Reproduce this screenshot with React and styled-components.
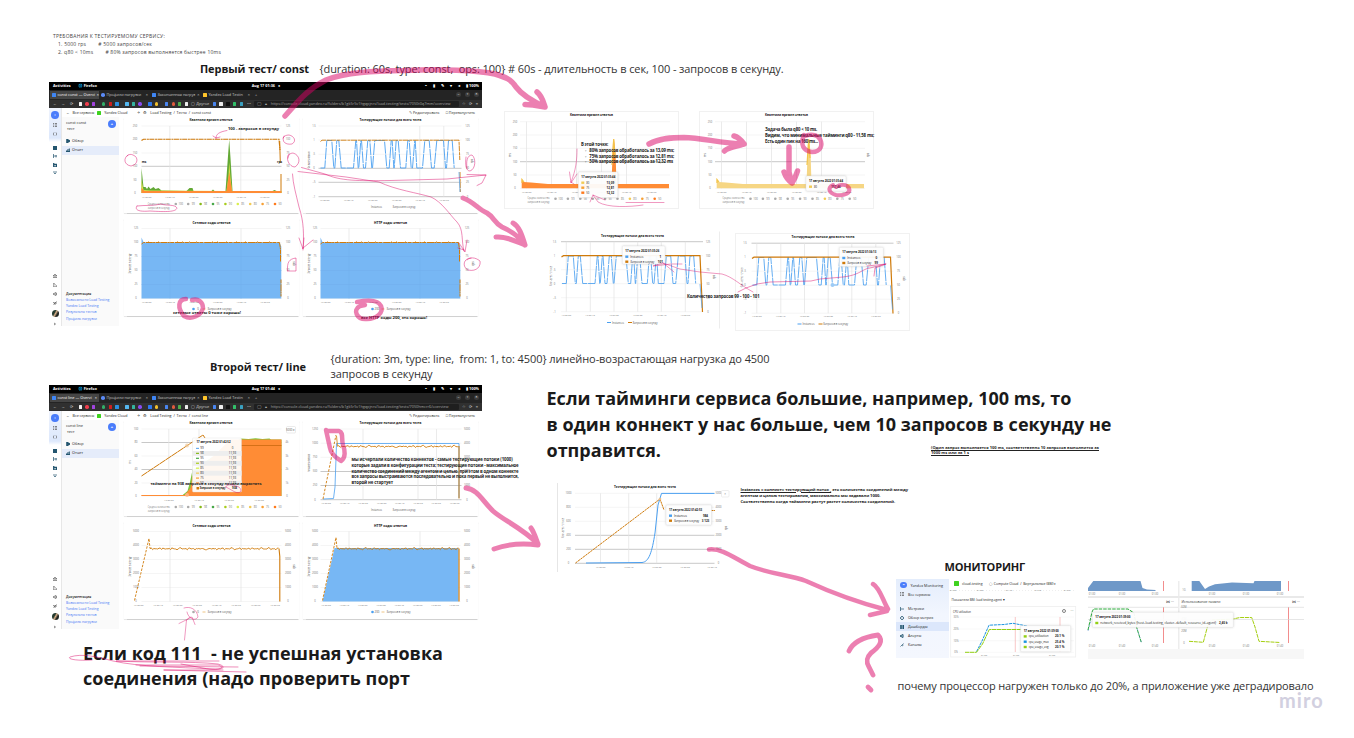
import React, { useLayoutEffect, useRef, useState } from "react";
import styled, { createGlobalStyle } from "styled-components";

const Global = createGlobalStyle`
  * { box-sizing: border-box; }
  html, body { margin: 0; padding: 0; background: #fff; }
  body { font-family: "Open Sans", "Noto Sans", sans-serif; color: #1a1a1a; overflow: hidden; }
`;

const BLUE = "#4a9ff0";
const AREA = "#77b7f4";
const AMBER = "#cf7a0a";
const ORANGE = "#ff8c35";
const GRID = "#e2e2e2";

/* ---------- free canvas ---------- */
const Board = styled.main`
  position: relative;
  width: 1354px;
  height: 738px;
  background: #fff;
  overflow: hidden;
`;
const Pin = styled.section`
  position: absolute;
  left: ${(p) => p.$x}px;
  top: ${(p) => p.$y}px;
  width: ${(p) => (p.$w ? `${p.$w}px` : "max-content")};
  ${(p) => p.$h && `height: ${p.$h}px;`}
`;
const NoteBox = styled.div`
  display: flex;
  flex-direction: column;
  align-items: flex-start;
  font-size: ${(p) => p.$size}px;
  line-height: ${(p) => p.$lh}px;
  font-weight: ${(p) => (p.$bold ? 700 : 400)};
  color: ${(p) => p.$color || "#1a1a1a"};
  ${(p) => p.$font && `font-family: ${p.$font};`}
`;
const Line = styled.span`
  white-space: pre;
  padding-left: ${(p) => p.$indent || 0}px;
  text-decoration: ${(p) => (p.$underline ? "underline" : "none")};
  text-decoration-thickness: 0.5px;
`;

/* One line whose tracking is adjusted so that it fills the given width. */
function FitLine({ width, children, ...rest }) {
  const ref = useRef(null);
  const [track, setTrack] = useState(0);
  useLayoutEffect(() => {
    if (!width || !ref.current) return;
    const range = document.createRange();
    range.selectNodeContents(ref.current);
    const natural = range.getBoundingClientRect().width;
    setTrack((width - natural) / String(ref.current.textContent).length);
  }, [width]);
  return (
    <Line ref={ref} style={{ letterSpacing: `${track}px` }} {...rest}>
      {children}
    </Line>
  );
}

function Note({ x, y, size, lh, bold, color, font, lines }) {
  return (
    <Pin $x={x} $y={y}>
      <NoteBox $size={size} $lh={lh} $bold={bold} $color={color} $font={font}>
        {lines.map((l, i) => (
          <FitLine key={i} width={l.w} $indent={l.indent} $underline={l.u}>
            {l.t}
          </FitLine>
        ))}
      </NoteBox>
    </Pin>
  );
}

/* ---------- browser window ---------- */
const Window = styled.div`
  display: flex;
  flex-direction: column;
  width: 433px;
  height: 243.5px;
`;
const OsBar = styled.div`
  display: flex;
  justify-content: space-between;
  align-items: center;
  height: 8px;
  padding: 0 3px 0 4px;
  background: #000;
  color: #fff;
  font-size: 3.8px;
  line-height: 8px;
  font-weight: 700;
`;
const OsGroup = styled.div`
  display: flex;
  justify-content: ${(p) => (p.$end ? "flex-end" : "flex-start")};
  gap: ${(p) => p.$gap || 7}px;
  width: 170px;
  white-space: nowrap;
`;
const TabBar = styled.div`
  display: flex;
  align-items: center;
  height: 9.5px;
  padding-left: 1px;
  background: #242424;
  color: #bbb;
  font-size: 3.8px;
  line-height: 8px;
`;
const Tab = styled.div`
  display: flex;
  align-items: center;
  gap: 2px;
  width: ${(p) => p.$w}px;
  height: 8.5px;
  padding: 0 2px;
  background: ${(p) => (p.$active ? "#454545" : "transparent")};
  color: ${(p) => (p.$active ? "#fff" : "#c4c4c4")};
  white-space: nowrap;
`;
const TabTitle = styled.span`
  flex: 1;
`;
const Fav = styled.i`
  flex: none;
  width: ${(p) => p.$s || 3.5}px;
  height: ${(p) => p.$s || 3.5}px;
  border-radius: ${(p) => (p.$round ? "50%" : "0.5px")};
  background: ${(p) => p.$c};
`;
const WinButtons = styled.div`
  display: flex;
  gap: 4px;
  margin-left: auto;
  padding-right: 3px;
`;
const WinButton = styled.span`
  width: 5px;
  height: 5px;
  border-radius: 50%;
  background: #3b3b3b;
  color: #fff;
  font-size: 4px;
  line-height: 4.5px;
  text-align: center;
`;
const UrlBar = styled.div`
  display: flex;
  align-items: center;
  gap: 3.3px;
  height: 8.8px;
  padding: 0 4px;
  background: #303030;
  color: #cfcfcf;
  font-size: 3.8px;
  line-height: 8px;
  white-space: nowrap;
`;
const Nav = styled.span`
  width: ${(p) => p.$w || 5}px;
`;
const Address = styled.div`
  flex: 1;
  display: flex;
  align-items: center;
  gap: 4px;
  height: 6.6px;
  padding-left: 3px;
  background: #1f1f1f;
  border-radius: 1px;
  line-height: 6px;
  color: #a5a5a5;
`;
const Body = styled.div`
  display: flex;
  flex: 1;
  min-height: 0;
`;
const Rail = styled.div`
  display: flex;
  flex-direction: column;
  justify-content: space-between;
  align-items: center;
  width: 13px;
  padding: 3px 0 0;
  background: linear-gradient(#eef3fd 0, #dde8fc 30px, #fff 34px);
  border-right: 1px solid #e7e7e7;
`;
const RailGroup = styled.div`
  display: flex;
  flex-direction: column;
  align-items: center;
  gap: ${(p) => p.$gap}px;
`;
const Disc = styled.i`
  flex: none;
  width: ${(p) => p.$s}px;
  height: ${(p) => p.$s}px;
  border-radius: 50%;
  background: ${(p) => p.$c || "#4a7dfb"};
  color: #fff;
  font: normal 700 4px/7px "Open Sans", sans-serif;
  text-align: center;
`;
const Side = styled.div`
  display: flex;
  flex-direction: column;
  width: 57px;
  padding-bottom: 3.5px;
  background: linear-gradient(#fff 0, #fff 9px, #fafafa 9px);
  font-size: 3.8px;
  line-height: 6.3px;
  color: #222;
`;
const SideHead = styled.div`
  display: flex;
  justify-content: space-between;
  align-items: flex-start;
  height: 20px;
  margin-top: 8px;
  padding: 3.8px 3px 0 4px;
`;
const SideItem = styled.div`
  display: flex;
  align-items: center;
  gap: 2px;
  height: 8.8px;
  padding-left: 4px;
  background: ${(p) => (p.$active ? "#e5ecfa" : "transparent")};
`;
const Links = styled.div`
  display: flex;
  flex-direction: column;
  gap: 0;
  margin-top: auto;
  padding-left: 4px;
  color: #3d73f5;
  font-size: 3.4px;
`;
const LinksTitle = styled.b`
  color: #111;
  font-weight: 600;
`;
const Main = styled.div`
  flex: 1;
  display: flex;
  flex-direction: column;
`;
const Crumbs = styled.div`
  display: flex;
  align-items: center;
  gap: 3px;
  height: 8.7px;
  margin-left: -57px;
  padding: 0 7px 0 4px;
  font-size: 3.6px;
  line-height: 8px;
  color: #222;
  white-space: nowrap;
`;
const Spacer = styled.span`
  flex: ${(p) => (p.$w ? `0 0 ${p.$w}px` : 1)};
`;
const Cards = styled.div`
  display: grid;
  grid-template-columns: 175px 175px;
  grid-template-rows: 96.5px 98px;
  gap: 5px 4px;
  padding-left: 4.5px;
`;
const Card = styled.div`
  background: #fff;
  box-shadow: 0 0.5px 1px rgba(0, 0, 0, 0.18);
`;
const Plain = styled.div`
  height: 100%;
  background: #fff;
  border: 1px solid #f1f1f1;
  ${(p) => p.$soft && "border-color: transparent #ededed transparent transparent;"}
`;
const Drawing = styled.svg`
  display: block;
  width: 100%;
  height: 100%;
  overflow: visible;
  font-family: "Open Sans", "Noto Sans", sans-serif;
`;

/* Small svg label centred on x,y; w fixes its drawn width. */
function T({ x, y, w, s = 3, c = "#777", b, rot, children }) {
  return (
    <text
      x={w ? x - w / 2 : x}
      y={y + s * 0.36}
      fontSize={s}
      fill={c}
      fontWeight={b ? 700 : 400}
      textAnchor={w ? "start" : "middle"}
      textLength={w}
      lengthAdjust="spacingAndGlyphs"
      transform={rot ? `rotate(-90 ${x} ${y})` : undefined}
    >
      {children}
    </text>
  );
}

function Axes({ x0, x1, ys, vs = [], left = [], right = [], lx, rx, times = [], ty, strong = [] }) {
  return (
    <g>
      {ys.map((y, i) => (
        <line key={y} x1={x0} x2={x1} y1={y} y2={y} stroke={strong.includes(i) ? "#a3a3a3" : "#efefef"} strokeWidth=".6" />
      ))}
      {vs.map((x) => (
        <line key={x} x1={x} x2={x} y1={ys[0]} y2={ys[ys.length - 1]} stroke={GRID} strokeWidth=".7" />
      ))}
      {left.map((t, i) => <T key={i} x={lx} y={ys[i]} s={2.6}>{t}</T>)}
      {right.map((t, i) => <T key={i} x={rx} y={ys[i]} s={2.6}>{t}</T>)}
      {times.map((x, i) => <T key={x} x={x} y={ty} w={9.5} s={2.5}>{`17:35:${i}0`}</T>)}
    </g>
  );
}

const steps = (a, d, n) => Array.from({ length: n }, (_, i) => a + d * i);
const WAVE = [133, 139, 154, 160, 163, 169, 175, 182, 219, 226, 228, 233, 235, 241, 243, 249, 255, 262, 268, 274, 276, 283, 312, 319, 326, 332, 335, 340, 341, 347, 353, 360, 376, 382, 386, 392, 396, 403, 404, 409, 426, 433, 446, 453, 461, 469, 489, 495, 498, 504, 515, 521];
function wavePath(dx, top, bot) {
  let d = `M${320 + dx} ${bot}`;
  WAVE.forEach((v, i) => {
    const low = i % 4 === 0 || i % 4 === 3;
    d += `L${(v / 3 + 280 + dx).toFixed(1)} ${low ? bot : top}`;
  });
  return d;
}

function Zig({ x0, x1, y, amp = 1.1, w = 0.9, n = 60 }) {
  let d = `M${x0} ${y}`;
  for (let i = 1; i <= n; i++) {
    const k = ((i * i * 31 + i * 17) % 23) / 23;
    d += `L${(x0 + ((x1 - x0) * i) / n).toFixed(1)} ${(y + (k - 0.5) * 2 * amp * (i % 7 < 4 ? 1 : 0.25)).toFixed(2)}`;
  }
  return <path d={d} fill="none" stroke={AMBER} strokeWidth={w} />;
}

const PCT = ["100", "99", "98", "95", "90", "85", "80", "75", "50"];
const PCT_C = ["#aaa", "#aaa", "#86b817", "#4aa84a", "#a8cc1c", "#d9ee4c", "#f2cb55", "#f7a034", "#ff7a1c"];
function PctLegend({ x, y, step = 12.4, text = 22, colors = PCT_C }) {
  return (
    <g>
      <T x={x + text / 2 - 28} y={y - 0.5} w={text} s={2.8}>Среднее количество</T>
      <T x={x + text / 2 - 28} y={y + 3.5} w={text} s={2.8}>запросов в секунду</T>
      {PCT.map((p, i) => (
        <g key={p}>
          <circle cx={x + step * i} cy={y} r="1.3" fill={colors[i]} />
          <T x={x + 5 + step * i} y={y} s={2.7}>{p}</T>
        </g>
      ))}
    </g>
  );
}

function TimingConst() {
  return (
    <Drawing viewBox="123.5 117 175 96.5">
      <T x={210.500} y={120} w={43} s={3.2} c="#111" b>Квантили времен ответов</T>
      <Axes x0={141} x1={281} ys={[126, 139.3, 153, 166.3, 180, 193]} strong={[3]} vs={[169.3, 240.3]}
        left={["250", "200", "150", "100", "50", "0"]} lx={134.5} right={["125", "100", "75", "50", "25", "0"]} rx={287.5}
        times={[146, 169.3, 193, 217, 240.5, 264]} ty={197} />
      <path d="M141 193V168L143 187L145 187L146.500 189L148 186.500L150 189L153 187L155 189L158 188L161 190.500L186 191L189 188L192 188L193 191L211 191L212.500 189.500L214 191L225 191L227.500 156L228.700 139.500L230 158L232 191L272 191L274 190L276 191H281V193Z" fill="#63a935" />
      <path d="M141 193V180L143 190L150 190.500L226 191L228 176L228.700 162L230 178L231.500 191H281V193Z" fill="#dbe04a" />
      <path d="M141 193V188L144 191H226L228.700 172L231.500 191H281V193Z" fill={ORANGE} />
      <path d="M141 140.500L143 139.300H278.500L279.500 150" fill="none" stroke={AMBER} strokeWidth="1.100" strokeDasharray="5 .7 2 .5" />
      <path d="M279.200 141L279.800 163M280.500 174V191" stroke={AMBER} strokeWidth="1" />
      <T x={143.500} y={161.500} s={3.200} c="#222" b>ms</T>
      <T x={279} y={161.500} s={3.200} c="#222" b>rps</T>
      <T x={253} y={128.500} w={51} s={4} c="#222" b>100 - запросов в секунду</T>
      <PctLegend x={175.300} y={204} />
    </Drawing>
  );
}

function ThreadsConst() {
  return (
    <Drawing viewBox="302.5 117 175 96.5">
      <T x={390} y={120} w={62} s={3.200} c="#111" b>Тестирующие потоки для всего теста</T>
      <Axes x0={318} x1={461} ys={[126, 140, 154.300, 168.300, 182.300, 196.700]} strong={[3, 4, 5]} vs={[419.300, 443.300]}
        left={["1.5", "1", ".5", "0", "-.5", "-1"]} lx={313.500} right={["125", "100", "75", "50", "25", "0"]} rx={467}
        times={[324, 348, 372, 396, 419.500, 443.500]} ty={200} />
      <T x={308.500} y={160} w={17} s={2.800} c="#333" rot>Количество потоков</T>
      <T x={471.500} y={161} s={2.800} c="#333" rot>rps</T>
      <path d={wavePath(0, 140.500, 168)} fill="none" stroke={BLUE} strokeWidth=".9" strokeDasharray="12 .8" />
      <path d="M320 141.500L321.500 140.200H458.500L459.300 160M459.500 172L459.800 192" fill="none" stroke={AMBER} strokeWidth=".9" strokeDasharray="6 .8 3 .5" />
      <path d="M458.500 172L459.500 192" stroke={BLUE} strokeWidth=".7" />
      <T x={376} y={206.700} w={11} s={2.800} c="#555">Instances</T>
      <T x={403.500} y={206.700} w={23} s={2.800} c="#555">Запросов в секунду</T>
    </Drawing>
  );
}

function Codes({ dx = 0, dy = 0, title, tw, labels, code, line, children, times }) {
  return (
    <Drawing viewBox={`${123.5 + dx} ${218.5 + dy} 175 98`}>
      <T x={211 + dx} y={223 + dy} w={tw} s={3.200} c="#111" b>{title}</T>
      <Axes x0={141 + dx} x1={281 + dx} ys={steps(229 + dy, 14, 6)} strong={[]} vs={[169.500 + dx, 240.500 + dx]}
        left={labels} lx={135.500 + dx} right={labels} rx={287.500 + dx}
        times={times || steps(146 + dx, 23.700, 6)} ty={302.500 + dy} />
      <T x={129.500 + dx} y={264 + dy} w={20} s={2.800} c="#333" rot>Запросов в секунду</T>
      <T x={293 + dx} y={264 + dy} s={2.800} c="#222" rot>rps</T>
      {children}
      <circle cx={193 + dx} cy={309.500 + dy} r="1.300" fill={code === "0" && line ? "#aaa" : BLUE} />
      <T x={197.500 + dx} y={309.500 + dy} s={2.800} c="#555">{code}</T>
      <line x1={202 + dx} x2={205 + dx} y1={309.500 + dy} y2={309.500 + dy} stroke="#e8ad50" strokeWidth=".7" />
      <T x={219 + dx} y={309.500 + dy} w={24} s={2.800} c="#555">Запросов в секунду</T>
    </Drawing>
  );
}

function FlatArea({ dx = 0 }) {
  return (
    <g transform={`translate(${dx} 0)`}>
      <path d="M141 299V238L143 242.500L145 243H279L280.800 247V299Z" fill={AREA} />
      <path d="M141 257H281M141 271H281M141 285H281M169.500 243V299M240.500 243V299" stroke="#6facea" strokeWidth=".4" />
      <path d="M141 244.500L143 243H279L280 250V262M280.500 280V297" fill="none" stroke={AMBER} strokeWidth="1" strokeDasharray="4 .8 7 .3 2 .5" />
      {[148, 158, 177, 182, 189, 196, 212, 217, 226, 236, 245, 257, 269].map((x) => (
        <path key={x} d={`M${x - 1} 243L${x} 242.300L${x + 1} 243`} stroke={AMBER} strokeWidth=".8" fill="none" />
      ))}
    </g>
  );
}

function TimingLine() {
  return (
    <Drawing viewBox="123.5 420 175 96.5">
      <T x={210.500} y={423} w={43} s={3.200} c="#111" b>Квантили времен ответов</T>
      <Axes x0={141} x1={281} ys={[429, 442.500, 456, 469.500, 483, 496]} strong={[1, 3]} vs={[168.300, 198.500]}
        left={["100", "80", "60", "40", "20", "0"]} lx={135.500} right={["", "4k", "3k", "2k", "1k", "0"]} rx={286.500}
        times={[168.300, 198.500, 228.500, 258.500]} ty={500} />
      <rect x={286} y={426.500} width="9" height="6.500" rx="1" fill="#fff" stroke="#ddd" strokeWidth=".6" />
      <T x={290} y={429.500} s={2.800} c="#555">5000 ▾</T>
      <T x={129} y={462} s={2.800} rot>ms</T>
      <path d="M181 496L187 491L189.500 482L192 470L240 438.500L248 439L255 438.300L262 439L269 438.500L270.500 439.500H281V496Z" fill="#7fc43a" />
      <path d="M141 496V495.300H184L190 488L192 476L230 439.500H281V496Z" fill={ORANGE} />
      <path d="M141 495.500H186" stroke={ORANGE} strokeWidth="1" />
      <path d="M141 476L202.500 435L204.500 438" fill="none" stroke={AMBER} strokeWidth="1" strokeDasharray="7 .3" />
      <path d="M240 445.500H281" stroke="#cc6a10" strokeWidth=".8" />
      <circle cx={186.500} cy={445.500} r="2" fill="#efc99b" opacity=".7" />
      <circle cx={186.500} cy={495} r="2" fill="#ffb98a" opacity=".8" />
      <rect x={192} y={438} width="49" height="54" rx="1" fill="#fff" fillOpacity=".93" stroke="#ddd" strokeWidth=".4" />
      <T x={213} y={442} w={34} s={3} c="#111" b>17 августа 2022 01:42:52</T>
      {["99", "98", "95", "90", "85", "80", "75", "50"].map((p, i) => (
        <g key={p}>
          {i % 2 === 1 && <rect x={192} y={446 + i * 4.950} width="49" height="4.900" fill="#eee" />}
          <rect x={195.500} y={447.800 + i * 4.950} width="3" height="1.200" fill={["#6aaef0", "#86b817", "#4aa84a", "#a8cc1c", "#d9ee4c", "#f2cb55", "#f7a034", "#ff7a1c"][i]} />
          <T x={201.500} y={448.400 + i * 4.950} s={2.900} c="#222">{p}</T>
          <T x={232} y={448.400 + i * 4.950} s={2.900} c="#222">{i ? "11,93" : "0"}</T>
        </g>
      ))}
      <rect x={196} y={487} width="2.500" height="2.500" fill={AMBER} />
      <T x={212} y={488.300} w={26} s={3} c="#222" b>Запросов в секунду</T>
      <T x={234} y={488.300} s={3} c="#222" b>938</T>
      <T x={205.500} y={483.500} w={111} s={4} c="#222" b>тайминги на 938 запросов в секунду начали вырастать</T>
      <PctLegend x={175.300} y={507} />
    </Drawing>
  );
}

function ThreadsLine() {
  return (
    <Drawing viewBox="302.5 420 175 96.5">
      <T x={390} y={423} w={62} s={3.200} c="#111" b>Тестирующие потоки для всего теста</T>
      <Axes x0={320} x1={461} ys={[429, 443.200, 457.300, 471.500, 485.500, 499.700]} strong={[3, 4, 5]} vs={[362.500, 417.500, 436]}
        left={["1250", "1000", "750", "500", "250", "0"]} lx={314.500} right={["5000", "4000", "3000", "2000", "1000", "0"]} rx={466.500}
        times={[325.500, 344, 362.500, 381, 399, 417.500, 435.500, 454]} ty={503} />
      <T x={308.500} y={463} w={18} s={2.800} c="#333" rot>Количество потоков</T>
      <path d="M322.500 499L333 498.500L334.500 487L336 443.500H458.500V498" fill="none" stroke={BLUE} strokeWidth=".8" />
      <path d="M322.500 499L335.500 435" fill="none" stroke={AMBER} strokeWidth=".9" strokeDasharray="2.500 1.500" />
      <path d="M336 436L337 446" stroke={AMBER} strokeWidth=".8" />
      <Zig x0={337} x1={458} y={446.500} n={90} />
      <path d="M458.500 446V498.500" stroke={AMBER} strokeWidth="1" />
      <T x={376} y={509.700} w={11} s={2.800} c="#555">Instances</T>
      <T x={403.500} y={509.700} w={23} s={2.800} c="#555">Запросов в секунду</T>
    </Drawing>
  );
}

const FAVS = ["#f4f4f4", "#ef3d4d", "#a244e0", null, "#32b06a", "#d01f1f", "#2a8fe0", null, "#55b7ef", "#34b5a0", "#8a4bf0", null, "#2f78f0", "#f3c12d", null, "#4a86f0", "#e25b3d", "#4fae4a", "#eee"];

function Browser({ name, url, time, children }) {
  return (
    <Window>
      <OsBar>
        <OsGroup><span>Activities</span><span>🌐 Firefox</span></OsGroup>
        <span>Aug 17 {time} &nbsp; ●</span>
        <OsGroup $end $gap={6}><span>◓</span><span>▮</span><span>✎</span><span>▾</span><span>◂</span><span>▮ 100%</span></OsGroup>
      </OsBar>
      <TabBar>
        <Tab $active $w={49}><Fav $c="#3f86f5" /><TabTitle>{name} — Overvi</TabTitle>×</Tab>
        <Tab $w={51}><Fav $c="#5b8bf7" $round /><TabTitle>Профили нагрузки</TabTitle>×</Tab>
        <Tab $w={51}><Fav $c="#3f86f5" /><TabTitle>Законченная нагруз</TabTitle>×</Tab>
        <Tab $w={51}><Fav $c="#ffc52b" /><TabTitle>Yandex Load Testin</TabTitle>×</Tab>
        <Spacer $w={3} />+
        <WinButtons><WinButton>–</WinButton><WinButton>▫</WinButton><WinButton>×</WinButton></WinButtons>
      </TabBar>
      <UrlBar>
        <Nav>←</Nav><Nav>→</Nav><Nav $w={6}>⟳</Nav>
        {FAVS.map((c, i) => (c ? <Fav key={i} $c={c} $s={3.3} $round={i % 3 === 1} /> : <Fav key={i} $c="transparent" $s={0.1} />))}
        <span>▢ Другое</span>
        <Fav $c="#4a86f0" /><Fav $c="#eee" /><Fav $c="#111" /><Fav $c="#32c06a" /><Fav $c="#3aa0c0" /><Nav $w={4}>⋯</Nav>
        <Address><span>◯</span><span>🔒︎</span><span>https://console.cloud.yandex.ru/folders/b1gk5r5v1hgqpjnrs/load-testing/tests/{url}/overview</span></Address>
        <span>☆</span><span>⟳</span><span>≡</span>
      </UrlBar>
      <Body>
        <Rail>
          <RailGroup $gap={4.6}>
            <Disc $s={7.4}>›</Disc>
            <RailIcon d="M0 .5H1M1.800 .5H4M0 2H1M1.800 2H4M0 3.500H1M1.800 3.500H4" />
            <RailIcon d="M1 .5L0 2L1 3.500M3 .5L4 2L3 3.500" />
            <Spacer $w={0.5} />
            <RailIcon c="#23556f" w={1.8} d="M0 1H4M0 3H4" />
            <RailIcon c="#23556f" d="M.5 0V4M.5 2H4M3 3.500V1" />
            <RailIcon c="#23556f" w={1.3} d="M.7 0V4H3.500V1.500H1" />
            <RailIcon c="#23556f" d="M0 1H4M1 2.500H3" />
          </RailGroup>
          <RailGroup $gap={4.9}>
            <RailIcon d="M2 0L2.600 1.500H4L3 2.500L3.500 4L2 3L.5 4L1 2.500L0 1.500H1.400Z" />
            <RailIcon d="M2 0A2 2 0 1 0 4 2M2 1V2.500" />
            <RailIcon d="M0 2L3 .5V3.500ZM3.800 1V3" />
            <RailIcon d="M.5 3.500L3.500 .5M2 2H4M0 1.500L2 2V4" />
            <Disc $s={7} $c="linear-gradient(120deg,#243a2e 35%,#d8b08a 50%,#1f2420 70%)" />
            <RailIcon d="M1 1L2.500 2L1 3" />
          </RailGroup>
        </Rail>
        <Side>
          <SideHead>
            <div>{name}<br />&nbsp;тест</div>
            <Disc $s={8}>+</Disc>
          </SideHead>
          <Spacer $w={0.8} />
          <SideItem><RailIcon c="#23556f" w={1.6} d="M1 .5V3.500L3.500 2Z" />Обзор</SideItem>
          <SideItem $active><RailIcon c="#23556f" w={1} d="M0 3.500H4M1 3V2M2 3V1M3.300 3V.5" />Отчет</SideItem>
          <Links>
            <LinksTitle>Документация</LinksTitle>
            <span>Возможности Load Testing</span>
            <span>Yandex Load Testing</span>
            <span>Результаты тестов</span>
            <span>Профиль нагрузки</span>
          </Links>
        </Side>
        <Main>
          <Crumbs>
            <span>←</span><span>Все сервисы</span><Fav $c="#3fd21f" $s={4} /><span>Yandex Cloud</span>
            <Spacer $w={4} /><span>✧</span><span>⚙</span><span>Load Testing &nbsp;/&nbsp; Тесты &nbsp;/&nbsp; {name}</span>
            <Spacer />
            <span>✎ Редактировать</span><Spacer $w={0.5} /><span>□ Перезапустить</span>
          </Crumbs>
          <Cards>{children.map((c, i) => <Card key={i}>{c}</Card>)}</Cards>
        </Main>
      </Body>
    </Window>
  );
}

function RailIcon({ d, c = "#555", w = 0.7 }) {
  return (
    <svg width="4" height="4" viewBox="0 0 4 4" fill="none" stroke={c} strokeWidth={w}>
      <path d={d} />
    </svg>
  );
}

/* ---------- standalone snippets ---------- */
function SmallTiming({ dx = 0, fill, children }) {
  return (
    <Plain>
      <Drawing viewBox={`${505 + dx} 112 173 96`}>
        <T x={591.500 + dx} y={115} w={43} s={3.200} c="#111" b>Квантили времен ответов</T>
        <Axes x0={520 + dx} x1={670 + dx} ys={steps(121.700, 13.330, 6)} strong={[3]} vs={steps(526.500 + dx, 25, 5)}
          left={["250", "200", "150", "100", "50", "0"]} lx={515 + dx} times={steps(526.500 + dx, 25, 6)} ty={192} />
        <T x={510 + dx} y={155} s={2.800} c="#333" rot>ms</T>
        <path d={`M${521.700 + dx} 188.300V179L${523.500 + dx} 182L${531 + dx} 182.500L${548 + dx} 184H${611.500 + dx}L${613 + dx} 142L${614 + dx} 139L${615.500 + dx} 152L${616.500 + dx} 184H${669 + dx}V188.300Z`} fill={fill} />
        <path d={`M${522 + dx} 183V179.500L${524 + dx} 182M${612 + dx} 165L${613.700 + dx} 139L${615 + dx} 158`} stroke="#f3c54a" strokeWidth="1.200" fill="none" />
        <PctLegend x={555.500 + dx} y={198.700} colors={["#aaa", "#aaa", "#aaa", "#aaa", "#aaa", "#aaa", "#f2cb55", dx ? "#aaa" : "#f7a034", dx ? "#aaa" : "#ff7a1c"]} />
        {children}
      </Drawing>
    </Plain>
  );
}

function Tip({ x, y, w, h, title, tw, rows, step = 5, vx }) {
  return (
    <g>
      <rect x={x} y={y} width={w} height={h} rx="1" fill="#fff" fillOpacity=".94" stroke="#e3e3e3" strokeWidth=".5" filter="drop-shadow(0 .6px 1px rgba(0,0,0,.15))" />
      <T x={x + 3 + tw / 2} y={y + 5} w={tw} s={3} c="#111" b>{title}</T>
      {rows.map(([c, t, w2, v], i) => (
        <g key={i}>
          <rect x={x + 3} y={y + 9.500 + i * step} width="3" height="2.400" fill={c} />
          <T x={x + 8 + w2 / 2} y={y + 10.700 + i * step} w={w2} s={3} c="#222">{t}</T>
          <T x={x + (vx || w - 7)} y={y + 10.700 + i * step} s={3} c="#222" b>{v}</T>
        </g>
      ))}
    </g>
  );
}

function SmallThreads({ dx = 0, dy = 0, view, children }) {
  return (
    <Plain $soft={!dx}>
      <Drawing viewBox={view}>
        <T x={632.500 + dx} y={235.700 + dy} w={63} s={3.200} c="#111" b>Тестирующие потоки для всего теста</T>
        <Axes x0={561 + dx} x1={703 + dx} ys={steps(241.700 + dy, 14, 6)} strong={[0]} vs={[566.300, 590.300, 614, 637.700, 661.300, 685.300].map((v) => v + dx)}
          left={["1.5", "1", ".5", "0", "-.5", "-1"]} lx={554.500 + dx} right={["125", "100", "75", "50", "25", "0"]} rx={708 + dx}
          times={steps(566.300 + dx, 23.800, 6)} ty={315 + dy} />
        <T x={551 + dx} y={276 + dy} w={20} s={2.800} c="#333" rot>Количество потоков</T>
        <T x={713.500 + dx} y={277 + dy} s={2.800} c="#333" rot>rps</T>
        <path d={wavePath(242 + dx, 256 + dy, 283.500 + dy)} fill="none" stroke={BLUE} strokeWidth=".85" strokeDasharray="12 .8" />
        <path d={`M${561.500 + dx} 257L${563.500 + dx} 255.700H${700 + dx}L${702.500 + dx} 312`} transform={`translate(0 ${dy})`} fill="none" stroke={AMBER} strokeWidth="1.200" />
        <path d={`M${700 + dx} ${284 + dy}L${702 + dx} ${308 + dy}`} stroke={BLUE} strokeWidth=".7" />
        <path d={`M${607 + dx} ${322.500 + dy}h4`} stroke={BLUE} />
        <T x={618 + dx} y={322.500 + dy} w={12} s={2.800} c="#555">Instances</T>
        <path d={`M${628 + dx} ${322.500 + dy}h4`} stroke={AMBER} />
        <T x={645 + dx} y={322.500 + dy} w={25} s={2.800} c="#555">Запросов в секунду</T>
        {children}
      </Drawing>
    </Plain>
  );
}

function GrowthChart() {
  return (
    <Drawing viewBox="557 483 177 89">
      <path d="M557.500 483V572" stroke="#e6e6e6" />
      <T x={645} y={487} w={62} s={3.200} c="#111" b>Тестирующие потоки для всего теста</T>
      <Axes x0={575} x1={714.500} ys={steps(493.300, 14, 6)} strong={[3, 4, 5]} vs={[600.500, 628.700, 656.700]}
        left={["1000", "800", "600", "400", "200", "0"]} lx={568.500} right={["5000", "4000", "3000", "2000", "1000", "0"]} rx={718.500}
        times={[600.500, 628.700, 656.700, 685, 712]} ty={567.500} />
      <T x={563} y={528} w={20} s={2.800} c="#333" rot>Количество потоков</T>
      <T x={726} y={528} s={2.800} c="#333" rot>rps</T>
      <path d="M575.500 563L660 499L664 510M711 510.500H715" fill="none" stroke={AMBER} strokeWidth="1" strokeDasharray="2.500 .6" />
      <path d="M586 563L642 562.500C649 562 652 552 655 533L658 505L661.500 493.400H714.500" fill="none" stroke={BLUE} strokeWidth="1" />
      <circle cx="660" cy="499" r="1.300" fill="#e9bd8b" />
      <rect x="721.500" y="490.500" width="7.500" height="6.500" rx="1" fill="#fff" stroke="#ddd" strokeWidth=".5" />
      <T x={725} y={494} s={3}>×</T>
      <Tip x={666} y={505} w={45.500} h={20} title="17 августа 2022 01:42:53" tw={33} vx={39.500} rows={[[BLUE, "Instances", 13, "984"], [AMBER, "Запросов в секунду", 25, "3 123"]]} />
    </Drawing>
  );
}

/* ---------- monitoring ---------- */
const Monitor = styled.div`
  display: flex;
  width: 180px;
  height: 79px;
  font-size: 3.7px;
  line-height: 7px;
`;
const MonSide = styled.div`
  width: 53px;
  padding-top: 2px;
  background: linear-gradient(#e4edfc, #f2f6fe 45%, #f4f7fe);
  display: flex;
  flex-direction: column;
`;
const MonItem = styled.div`
  display: flex;
  align-items: center;
  gap: 4px;
  height: ${(p) => p.$h || 9}px;
  padding-left: 4px;
  background: ${(p) => (p.$active ? "#dce7fb" : "transparent")};
`;
const MonMain = styled.div`
  flex: 1;
  display: flex;
  flex-direction: column;
`;
const MonTop = styled.div`
  display: flex;
  align-items: center;
  gap: 3px;
  height: 9px;
  padding-left: 5px;
  font-size: 3.4px;
  white-space: nowrap;
`;
const MonBody = styled.div`
  flex: 1;
`;

function MonitoringPanel() {
  return (
    <Monitor>
      <MonSide>
        <MonItem $h={8}><Disc $s={6.500}>⌃</Disc>Yandex Monitoring</MonItem>
        <MonItem $h={10}><RailIcon d="M0 .5H1M1.800 .5H4M0 2H1M1.800 2H4M0 3.500H1M1.800 3.500H4" />Все сервисы</MonItem>
        <Spacer $w={5} />
        <MonItem><RailIcon c="#23556f" d="M.5 0V4M.5 2H4" />Метрики</MonItem>
        <MonItem><RailIcon c="#23556f" w={1} d="M2 .5A1.500 1.500 0 1 0 2.100 .5Z" />Обзор метрик</MonItem>
        <MonItem $active><RailIcon c="#23556f" w={1.600} d="M1 0V4M3.200 0V4" />Дашборды</MonItem>
        <MonItem><RailIcon c="#23556f" w={1} d="M0 2L3 .5V3.500Z" />Алерты</MonItem>
        <MonItem><RailIcon c="#23556f" d="M.5 3.500L3.500 .5M2 3L3.500 2" />Каналы</MonItem>
      </MonSide>
      <MonMain>
        <MonTop><Fav $c="#3fd21f" $s={5} /><span>cloud-testing</span><Spacer $w={0.5} /><span>◯&nbsp; Compute Cloud &nbsp;/&nbsp; Виртуальные (ВМ) ▾</span></MonTop>
        <MonBody>
          <Drawing viewBox="949 588 127 70">
            <path d="M950 590.500H1076" stroke="#ddd" strokeWidth=".5" strokeDasharray="1 2" />
            {[953, 980, 1009, 1038, 1067].map((x, i) => <T key={x} x={x} y={590} s={2.500}>{`01:${i + 2}0`}</T>)}
            <T x={978} y={599.500} w={53} s={3.500} c="#222">Показатели ВМ: load testing-agent ▾</T>
            <rect x="950.7" y="606.500" width="125" height="50.500" fill="#fff" stroke="#eee" strokeWidth=".8" />
            <T x={962} y={611.500} w={18} s={3.300} c="#222">CPU utilization</T>
            <circle cx="1064" cy="611" r="1.500" fill="none" stroke="#333" strokeWidth=".6" /><T x={1072} y={611} s={4}>···</T>
            {[617, 629, 640.700, 652.300].map((y, i) => <g key={y}><line x1="959" x2="1074" y1={y} y2={y} stroke="#f0f0f0" strokeWidth=".5" /><T x={956} y={y} s={2.600}>{["30%", "20%", "10%", "0%"][i]}</T></g>)}
            <path d="M1015.300 617V652M1060 617V652" stroke="#f6b0b0" strokeWidth=".7" />
            <path d="M976.500 651.700L982 641L989 625.200L1004 624.500L1013 623.300L1027 626" fill="none" stroke="#1a94e0" strokeWidth="1" strokeDasharray="3 .8" />
            <path d="M965 652.300H976.500L982.500 644L989.300 629.500H1022" fill="none" stroke="#93cf12" strokeWidth="1" strokeDasharray="4.500 .5" />
            {[984, 1016, 1052].map((x) => <T key={x} x={x} y={655} s={2.400}>01:30</T>)}
            <Tip x={1020.700} y={625.700} w={50} h={26} title="17 августа 2022 01:39:00" tw={35} step={5.300}
              rows={[["#93cf12", "cpu_utilization", 20, "20.1 %"], ["#1a94e0", "cpu_usage_max", 20, "25.4 %"], ["#93cf12", "cpu_usage_avg", 20, "20.1 %"]]} vx={39} />
          </Drawing>
        </MonBody>
      </MonMain>
    </Monitor>
  );
}

function MonitoringCharts() {
  return (
    <Drawing viewBox="1088 581 216 78">
      <rect x="1088" y="649" width="216" height="10" fill="#f7f7f7" />
      <path d="M1088 591V588L1093.300 581H1140.500L1142.500 588L1147 589.500L1155.500 590V591Z" fill="#6e98c8" />
      <path d="M1191.700 591V581H1199.300L1205 589L1209 586.500L1215 584.300L1232 582.500L1253.500 583.300L1254.500 581H1281V591Z" fill="#6e98c8" />
      <path d="M1163.500 581V591M1288.500 581V591M1163.500 607V643M1288.500 607V643" stroke="#f08080" strokeWidth=".9" />
      <path d="M1088 597H1304" stroke="#e2e2e2" strokeWidth="1.500" />
      <path d="M1178.800 581V649" stroke="#eaeaea" strokeWidth="1.300" />
      <path d="M1088 607.300H1178M1180 607.300H1304M1088 619.500H1178M1184 619.500H1304" stroke="#d5d5d5" strokeWidth=".6" />
      {[1092, 1122, 1155, 1212, 1246, 1280].map((x) => <g key={x}><T x={x} y={594} s={2.600}>01:30</T><T x={x} y={645.800} s={2.600}>01:40</T></g>)}
      <T x={1201} y={602} w={39} s={3.300} c="#333">Использование памяти</T>
      <T x={1170} y={602} s={3.500} c="#333">⋈ ···</T>
      <T x={1296} y={602} s={3.500} c="#333">⋈ ···</T>
      {[["1G", 590.500], ["60M", 607.300], ["40M", 619.500], ["20M", 631], ["0", 643]].map(([t, y]) => <T key={t} x={1184} y={y} s={2.600}>{t}</T>)}
      <path d="M1088 630L1092 612L1093.500 609H1128L1134 613L1136.500 627L1141.500 643" fill="none" stroke="#28a838" strokeWidth="1" strokeDasharray="3.500 1" />
      <path d="M1088 631L1091 621M1136 625L1141.500 643" stroke="#3c7ec0" strokeWidth=".5" strokeDasharray="2 2" />
      <path d="M1189 641.300L1203.300 642.300L1208.300 623.500L1212 620L1233 619L1240 617.500H1251.700L1255 627L1259 641.300L1280 642.500" fill="none" stroke="#a5cf12" strokeWidth="1" strokeDasharray="4 .8" />
      <Tip x={1092.300} y={612.300} w={141} h={15} title="17 августа 2022 01:39:00" tw={35}
        rows={[["#93cf12", "network_received_bytes {host=load-testing, cluster=default, resource_id=agent}", 116, "2,40 k"]]} vx={131} />
    </Drawing>
  );
}

/* ---------- marker strokes ---------- */
const Marker = styled.svg`
  position: absolute;
  inset: 0;
  width: 1354px;
  height: 738px;
  fill: none;
  stroke: #da0063;
  stroke-linecap: round;
  stroke-linejoin: round;
  pointer-events: none;
`;
const Stroke = styled.path`
  stroke-width: ${(p) => p.$w || 1}px;
  opacity: 0.5;
`;

const STROKES = [
  [5.5, "M285 116C296 104 306 90 326 80C345 72 375 71 404 70.500C440 69 478 70 495 74C505 77 511 79 516 87C522 95 534 102 545 107M525 104.500L533 105L545 107M537 92C542 96 543 101 545 107"],
  [5.5, "M649 144C660 138 672 137.500 684 137.500C702 138 720 143 744 144M724.500 151C728 147 735 147 744 144M734 136C738 137 741 140 744 144"],
  [4.500, "M804 135C800 144 803 151 812 152C821 152 823 145 820 139C817 134 810 134 805 136"],
  [5.5, "M789 147V172C790 177 791 180 792 183M784 172C786 178 789 181 792 183M797.500 171C796 176 794 180 792 183"],
  [4, "M833 185C827 188 829 193 836 195C845 196 851 193 849 188C847 184 840 184 836 187"],
  [5, "M463 198C474 202 478 209 487 213C494 217 494 223 502 227C511 231 519 236 525 245M496 237C506 236 515 241 525 245M513 223C519 226 522 235 525 245"],
  [4.500, "M186 299C178 299 177 308 184 316C191 320 201 316 203 308C203 302 198 298 192 300"],
  [4.500, "M357 302C367 300 378 299 381 306C384 313 376 319 367 319C357 320 352 310 360 306L365 305"],
  [4.500, "M326 430L330 448C331 455 338 459 341 461C346 458 345 450 343 445C341 438 344 433 339 431H328"],
  [5, "M466 488C477 489 482 500 493 511C503 520 522 528 538 544M494 549C508 544 523 543 538 545M531 528C534 532 536 539 538 544"],
  [4.500, "M709 549.500C722 548 734 558 750 566C770 574 790 575 806 581C830 592 856 602 887 610M870 615L887 611M873 584C880 588 883 601 888 609"],
  [4.800, "M849 651C853 642 864 637 878 635C884 641 879 647 871 653C866 658 866 662 869 667L873 675M868 687L871 690"],
  [0.9, "M128 155C123 158 124 165 131 166C138 165 139 157 133 155C131 154 129 154 127 156"],
  [0.9, "M284 136C281 142 286 145 292 144C297 141 294 136 289 135C286 135 284 136 283 138M289 154C285 158 289 167 295 167C301 163 300 155 293 153C290 153 288 155 288 158"],
  [0.9, "M466 157C465 165 466 171 470 171C476 169 476 158 472 155C467 155 466 162 467 168"],
  [0.9, "M137 206C134 210 139 212 150 211C166 212 176 212 177 208C175 204 166 206 161 204C154 206 145 205 137 206"],
  [0.9, "M227 130.500C219 132 216 134 216 138M216 138L213 136M216 138L220 137"],
  [0.9, "M301.500 167.500L325 174C340 181 358 181 390 180.500L447 179L486 175M467 174.500L486 175L482 183L477 185.500"],
  [0.9, "M298 171.500L346 177L379 182C396 190 418 193 431 197C442 202 450 215 457 222C464 230 461 240 464 251M459 243L465 252L467 240M464 250L458 248"],
  [0.9, "M292.500 174C293 184 296 194 299 207C304 222 304 235 303 250M299 238L303 249L304 238M303 248L313 240"],
  [0.9, "M287.500 271C287 262 289 259 296 258V271H288M471 258C463 258 462 267 468 270C477 272 481 266 480 261C475 257 470 257 467 260"],
  [0.8, "M577 149C577 160 576 170 571 182M569.500 172L571 183L577 174M571 182L574 184"],
  [0.8, "M643 205C630 207 608 208 598 202L593 195M590 202L593 195L605 200M626 202.500H664"],
  [0.8, "M682 264H671L653 266L663 263L680 269L700 272L722 274C733 277 740 285 753 292M663 263L668 267L674 272"],
  [0.9, "M738 292L746 288L757 284L770 282L811 281L820 279L843 277C860 275 862 269 870 268L886 264M867 266L886 264L875 268L874 276"],
  [0.8, "M226 487C226 484 231 484 239 487C243 491 240 494 235 492L226 487"],
  [0.8, "M184.500 640L186.500 620L190 617M179 623.500L192 617L195 624.500M184 608C190 606 197 609 198 617C195 622 188 618 187 612"],
  [0.9, "M92 660C76 661 67 659 70 657C82 653 98 657 113 661C140 667 176 667 213 669C225 670 226 666 218 664C190 661 155 663 116 661H219M136 665H218C228 668 216 671 203 668L181 664M140 666L238 667M164 670L246 672M164 670H223"],
];

export default function App() {
  return (
    <>
      <Global />
      <Board>
        <Note x={53} y={32} size={5} lh={8} color="#444" lines={[
          { t: "ТРЕБОВАНИЯ К ТЕСТИРУЕМОМУ СЕРВИСУ:", w: 112 },
          { t: "1. 5000 rps        # 5000 запросов/сек", indent: 5, w: 94 },
          { t: "2. q80 < 10ms        # 80% запросов выполняется быстрее 10ms", indent: 5, w: 163 },
        ]} />
        <Note x={200} y={61} size={11} lh={16} bold lines={[{ t: "Первый тест/ const", w: 109 }]} />
        <Note x={319.5} y={61} size={11} lh={16} color="#333" lines={[{ t: "{duration: 60s, type: const,  ops: 100} # 60s - длительность в сек, 100 - запросов в секунду.", w: 464 }]} />
        <Note x={210} y={359} size={11} lh={16} bold lines={[{ t: "Второй тест/ line", w: 96 }]} />
        <Note x={330.5} y={351} size={11} lh={15} color="#333" lines={[
          { t: "{duration: 3m, type: line,  from: 1, to: 4500} линейно-возрастающая нагрузка до 4500", w: 439 },
          { t: "запросов в секунду", w: 102 },
        ]} />

        <Pin $x={49} $y={82}>
          <Browser name="const const" url="7050t0q7mm" time="01:36">
            {[
              <TimingConst key="a" />,
              <ThreadsConst key="b" />,
              <Codes key="c" title="Сетевые коды ответов" tw={38} code="0" labels={["125", "100", "75", "50", "25", "0"]}><FlatArea /></Codes>,
              <Codes key="d" dx={179} title="HTTP коды ответов" tw={33} code="200" labels={["125", "100", "75", "50", "25", "0"]}><FlatArea dx={179} /></Codes>,
            ]}
          </Browser>
        </Pin>
        <Note x={173} y={309.5} size={4.2} lh={6} bold lines={[{ t: "сетевые ответы 0 тоже хорошо!", w: 68 }]} />
        <Note x={361} y={314.5} size={4.2} lh={6} bold lines={[{ t: "все HTTP коды 200, это хорошо!", w: 66 }]} />

        <Pin $x={49} $y={385}>
          <Browser name="const line" url="7050hmcrr6" time="01:44">
            {[
              <TimingLine key="a" />,
              <ThreadsLine key="b" />,
              <Codes key="c" dy={303} title="Сетевые коды ответов" tw={38} code="0" line labels={["5000", "4000", "3000", "2000", "1000", "0"]} times={steps(138, 19.500, 8)}>
                <path d="M134 601L148.500 539L149.500 549" fill="none" stroke={AMBER} strokeWidth=".9" strokeDasharray="2.500 1.300" />
                <Zig x0={149.500} x1={278} y={549.300} n={100} />
                <path d="M278.500 549L279.300 557V602" stroke={AMBER} fill="none" strokeWidth="1.100" />
              </Codes>,
              <Codes key="d" dx={179} dy={303} title="HTTP коды ответов" tw={33} code="200" labels={["5000", "4000", "3000", "2000", "1000", "0"]} times={steps(325.500, 18.300, 8)}>
                <path d="M322 602L334 548.500H458V602Z" fill={AREA} />
                <path d="M322 601L335.500 538L336.500 549" fill="none" stroke={AMBER} strokeWidth=".9" strokeDasharray="2.500 1.300" />
                <Zig x0={336.500} x1={458} y={549.300} n={100} />
                <path d="M458.500 549V602" stroke={AMBER} fill="none" strokeWidth="1.200" />
              </Codes>,
            ]}
          </Browser>
        </Pin>
        <Note x={351.5} y={457} size={4.3} lh={5.8} bold color="#222" lines={[
          { t: "мы исчерпали количество коннектов - самые тестирующие потоки (1000)", w: 161 },
          { t: "которые задали в конфигурации теста; тестирующие потоки - максимальное", w: 167 },
          { t: "количество соединений между агентом и целью. при этом в одном коннекте", w: 167 },
          { t: "все запросы выстраиваются последовательно и пока первый не выполнится,", w: 167 },
          { t: "второй не стартует", w: 41.5 },
        ]} />

        <Pin $x={504} $y={111} $w={175} $h={98}>
          <SmallTiming fill={ORANGE}>
            <Tip x={578.3} y={172} w={39.5} h={25.500} title="17 августа 2022 01:35:44" tw={34} step={5}
              rows={[["#f2cb55", "80", 3, "13,09"], ["#f7a034", "75", 3, "12,81"], ["#ff7a1c", "50", 3, "12,32"]]} vx={32} />
          </SmallTiming>
        </Pin>
        <Note x={581} y={142} size={4.3} lh={5.8} bold color="#222" lines={[
          { t: "В этой точке:", w: 27 },
          { t: "◦   80% запросов обработалось за 13,09 ms;", indent: 4, w: 89 },
          { t: "◦   75% запросов обработалось за 12,81 ms;", indent: 4, w: 89 },
          { t: "◦   50% запросов обработалось за 12,32 ms", indent: 4, w: 88 },
        ]} />
        <Pin $x={699} $y={111} $w={175} $h={98}>
          <SmallTiming dx={195} fill="#f6d684">
            <T x={868} y={155} s={2.800} c="#333" rot>rps</T>
            <Tip x={806} y={176} w={40} h={15} title="17 августа 2022 01:35:44" tw={34} rows={[["#f2cb55", "80", 3, "157,46"]]} vx={30} />
          </SmallTiming>
        </Pin>
        <Note x={765} y={125.7} size={4.3} lh={6} bold color="#222" lines={[
          { t: "Задача была q80 < 10 ms.", w: 52 },
          { t: "Видим, что минимальные тайминги q80 - 11,58 ms;", w: 109 },
          { t: "Есть один пик на 160 ms...", w: 53 },
        ]} />

        <Pin $x={544} $y={231} $w={176} $h={98}>
          <SmallThreads view="545 232 174 96">
            <Tip x={622.3} y={246} w={42.700} h={18} title="17 августа 2022 01:35:26" tw={34} rows={[[BLUE, "Instances", 13, "1"], [AMBER, "Запросов в секунду", 24, "101"]]} vx={38} />
          </SmallThreads>
        </Pin>
        <Pin $x={735} $y={233} $w={175} $h={98}>
          <SmallThreads dx={190.500} dy={1.500} view="736 234 173 96">
            <circle cx="832.500" cy="285" r="2" fill="#9dcbf6" />
            <Tip x={839.3} y={247.300} w={44} h={19} title="17 августа 2022 01:36:13" tw={34} rows={[[BLUE, "Instances", 13, "0"], [AMBER, "Запросов в секунду", 24, "99"]]} vx={37} />
          </SmallThreads>
        </Pin>
        <Note x={687} y={293} size={4.3} lh={7} bold color="#222" lines={[{ t: "Количество запросов 99 - 100 - 101", w: 72.5 }]} />

        <Note x={546.5} y={385} size={18} lh={26} bold lines={[
          { t: "Если тайминги сервиса большие, например, 100 ms, то", w: 525 },
          { t: "в один коннект у нас больше, чем 10 запросов в секунду не", w: 565 },
          { t: "отправится.", w: 114.5 },
        ]} />
        <Note x={931} y={445} size={4} lh={5} bold color="#222" lines={[
          { t: "(Один запрос выполняется 100 ms, соответственно 10 запросов выполнится за", w: 168, u: true },
          { t: "1000 ms или за 1 s", w: 38, u: true },
        ]} />
        <Pin $x={557} $y={483} $w={177} $h={89}><GrowthChart /></Pin>
        <Note x={740.5} y={486.5} size={4.2} lh={6} bold color="#222" lines={[
          { t: <><u>Instances = коннект= тестирующий поток ,</u> это количество соединений между</>, w: 167.5 },
          { t: "агентом и целью тестирования, максимально мы задавали 1000.", w: 140 },
          { t: "Соответственно когда тайминги растут растет количество соединений.", w: 154.500 },
        ]} />

        <Note x={944.5} y={559} size={11} lh={16} bold lines={[{ t: "МОНИТОРИНГ", w: 80.500 }]} />
        <Pin $x={896} $y={579}><MonitoringPanel /></Pin>
        <Pin $x={1088} $y={581} $w={216} $h={78}><MonitoringCharts /></Pin>
        <Note x={897.5} y={678} size={11} lh={16} color="#333" lines={[{ t: "почему процессор нагружен только до 20%, а приложение уже деградировало", w: 416 }]} />
        <Note x={83} y={641} size={18} lh={25} bold lines={[
          { t: "Если код 111  - не успешная установка", w: 360 },
          { t: "соединения (надо проверить порт", w: 327 },
        ]} />

        <Marker viewBox="0 0 1354 738">
          {STROKES.map(([w, d], i) => <Stroke key={i} $w={w} d={d} />)}
        </Marker>
        <Note x={1279} y={688} size={20} lh={24} bold color="#d2d0e0" font="Lato, sans-serif" lines={[{ t: "miro", w: 45 }]} />
      </Board>
    </>
  );
}
